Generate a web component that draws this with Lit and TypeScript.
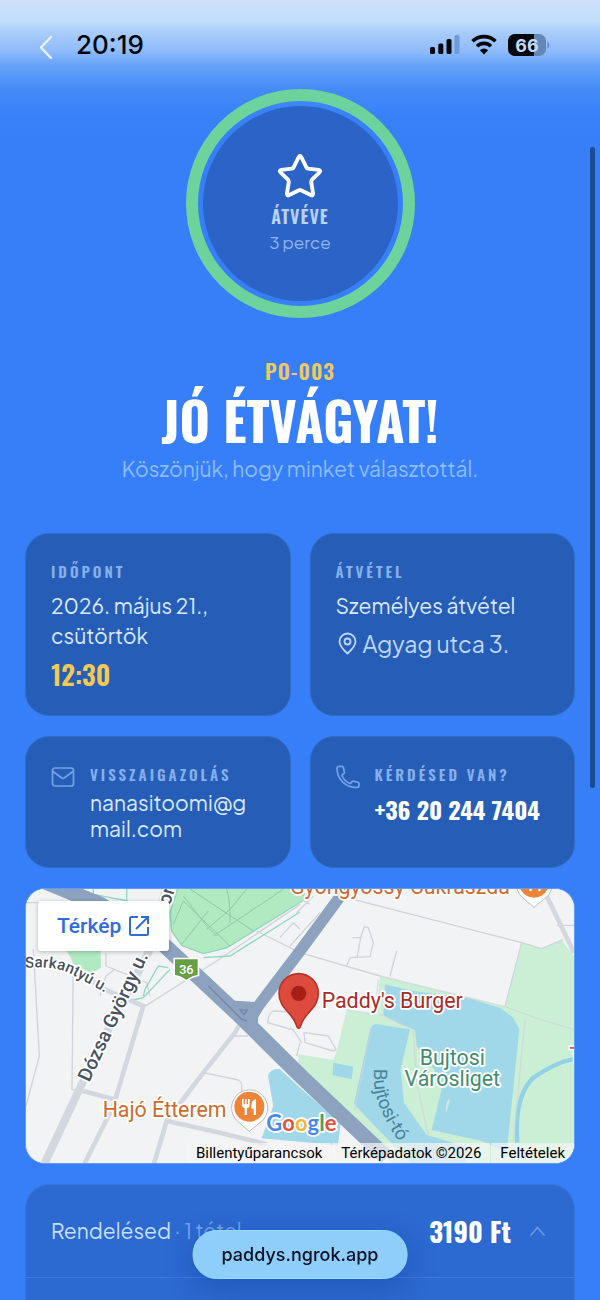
import { LitElement, html, css, svg } from "lit";
import { customElement, state } from "lit/decorators.js";

const tokens = css`
  :host {
    --display: "Oswald", "Roboto Condensed", "Liberation Sans Narrow", sans-serif;
    --body: "Plus Jakarta Sans", "Inter", sans-serif;
    --ui: "Inter", "Liberation Sans", sans-serif;
  }
  * {
    box-sizing: border-box;
  }
  p,
  h1,
  h2 {
    margin: 0;
  }
  a {
    color: inherit;
    text-decoration: none;
  }
  svg {
    display: block;
    flex: none;
  }
`;

@customElement("status-bar")
class StatusBar extends LitElement {
  static styles = [
    tokens,
    css`
      :host {
        display: block;
        color: #05070d;
        font-family: var(--ui);
      }
      .bar {
        display: flex;
        align-items: center;
        height: 89px;
        padding: 0 50px 0 38px;
      }
      .back {
        padding: 4px 0 0;
        border: 0;
        background: none;
        color: #eaf3ff;
      }
      .time {
        flex: 1;
        padding-left: 22px;
        font-size: 26px;
        font-weight: 500;
        line-height: 30px;
      }
      .signals {
        display: flex;
        align-items: center;
        gap: 11px;
      }
    `,
  ];

  render() {
    return html`
      <header class="bar">
        <button class="back" aria-label="Vissza">
          <svg width="16" height="26" viewBox="0 0 16 26" fill="none" stroke="currentColor" stroke-width="2.4" stroke-linecap="round" stroke-linejoin="round">
            <path d="M13 3 3 13.500l10 10.500" />
          </svg>
        </button>
        <time class="time">20:19</time>
        <div class="signals">
          <svg width="30" height="20" viewBox="0 0 30 20" fill="currentColor" role="img" aria-label="Térerő">
            <rect x="0" y="12" width="5" height="7" rx="1.5" />
            <rect x="8.300" y="8.500" width="5" height="10.500" rx="1.500" />
            <rect x="16.500" y="4" width="5" height="15" rx="1.500" />
            <rect x="24.500" y="0" width="5" height="19" rx="1.500" fill="#6f9bd6" />
          </svg>
          <svg width="26" height="21" viewBox="0 0 26 21" fill="none" stroke="currentColor" stroke-width="3.600" role="img" aria-label="Wi-Fi">
            <path d="M1.500 7.300a16.500 16.500 0 0 1 23 0" />
            <path d="M6 12.200a10 10 0 0 1 14 0" />
            <path d="M13 20.500 8.900 16.200a6 6 0 0 1 8.200 0Z" fill="currentColor" stroke="none" />
          </svg>
          <svg width="42" height="24" viewBox="0 0 42 24" role="img" aria-label="Akkumulátor 66%">
            <rect x="0" y="1" width="38" height="22" rx="7" fill="#6388b8" />
            <path d="M7 1h19v22H7a7 7 0 0 1-7-7V8a7 7 0 0 1 7-7Z" fill="#05070d" />
            <path d="M39.500 8.500c2.300 1 2.300 6 0 7Z" fill="#6388b8" />
            <text x="19" y="18.500" text-anchor="middle" fill="#c2dbf8" font-family="Inter, sans-serif" font-size="18" font-weight="700">66</text>
          </svg>
        </div>
      </header>
    `;
  }
}

@customElement("pickup-map")
class PickupMap extends LitElement {
  static styles = [
    tokens,
    css`
      :host {
        display: block;
      }
      .frame {
        display: grid;
        overflow: hidden;
        border: 1px solid #5f9bf5;
        border-radius: 20px;
        background: #f2f3f4;
        font-family: "Roboto", "Liberation Sans", sans-serif;
        font-weight: 400;
      }
      .canvas,
      .overlay {
        grid-area: 1 / 1;
        width: 100%;
      }
      .overlay {
        z-index: 1;
        display: flex;
        flex-direction: column;
        justify-content: space-between;
        align-items: flex-start;
      }
      .open {
        display: flex;
        align-items: center;
        gap: 8px;
        height: 50px;
        margin: 12px;
        padding: 0 20px 0 19px;
        border-radius: 3px;
        background: #fff;
        box-shadow: 0 1px 4px rgba(0, 0, 0, 0.25);
        color: #2f6cdb;
        font-size: 21px;
        font-weight: 500;
      }
      .legal {
        display: flex;
        align-self: flex-end;
        gap: 1px;
        color: #000;
        font-size: 15px;
        line-height: 20px;
      }
      .legal a {
        padding: 0 9px;
        background: rgba(245, 245, 245, 0.72);
      }
      .label {
        paint-order: stroke;
        stroke: #fff;
        stroke-width: 11px;
        stroke-linejoin: round;
      }
      .place {
        font-size: 64px;
      }
      .street {
        font-size: 58px;
        font-weight: 500;
        fill: #475160;
      }
      .minor {
        font-size: 46px;
      }
    `,
  ];

  private pin() {
    return svg`
      <path d="M897 457c-4 0-6-4-8-10-11-37-52-50-52-95a59 59 0 0 1 118 0c0 45-42 58-52 95-2 6-3 10-6 10Z" fill="#dd4b3e" stroke="#b5352a" stroke-width="5" />
      <circle cx="896" cy="352" r="23" fill="#a61f17" />`;
  }

  private food(x: number, y: number) {
    return svg`
      <g transform="translate(${x} ${y})">
        <path d="M0 74c-14-12-25-21-36-31A54 54 0 1 1 38 43C26 53 14 62 0 74Z" fill="#fff" stroke="#b9bdc2" stroke-width="3" />
        <circle r="45" fill="#ee8438" />
        <path d="M-22-23v17q0 9 8 10v21h7V4q8-1 8-10v-17h-5v16h-4v-16h-5v16h-4v-16ZM20-23q-14 4-14 20v9h7v19h7Z" fill="#fff" />
      </g>`;
  }

  render() {
    return html`
      <section class="frame" aria-label="Térkép">
        <svg class="canvas" viewBox="78 39 1644 822" role="img" aria-label="Paddy's Burger a térképen">
          <rect x="78" y="39" width="1644" height="822" fill="#f2f3f4" />
          <path d="M535 30H912V72L680 216 610 233 545 208 515 165 510 110Z" fill="#b1eac0" stroke="#8ed6bd" stroke-width="4" />
          <path d="M200 225H302L303 275 275 292 225 268Z" fill="#b1eac0" />
          <path d="M1010 525 1040 402 1130 415 1140 300 1515 392 1567 200 1625 218 1685 192 1730 250V870H1180L895 570V535L1000 552Z" fill="#caefd4" />
          <path d="M1155 325 1240 345 1400 365 1500 395 1540 425 1558 460 1520 830 1445 795 1295 762 1325 640 1302 580 1250 510 1245 462 1200 445 1150 418Z" fill="#a0d7e9" />
          <path d="M1130 445 1230 460 1202 580 1212 680 1280 777 1400 812V870H1240L1062 685 1110 460Q1115 445 1130 445Z" fill="#a0d7e9" />
          <path d="M1000 560 1060 572 1055 610 998 598Z" fill="#a0d7e9" />
          <path d="M804 600Q812 574 840 580L900 635 1022 742 1014 808 785 787 820 690Z" fill="#a0d7e9" />
          <path d="M1725 548Q1665 560 1600 605 1542 660 1552 800" fill="none" stroke="#92d2e8" stroke-width="13" />
          <path d="M1340 705l8-27v-12l-7 13-5 28Z" fill="#caefd4" />

          <g fill="none" stroke="#cfd4dc" stroke-width="4" stroke-linejoin="round">
            <path d="M78 80H120M100 220 118 540 78 690M220 230 216 640 345 675M345 280 318 300 300 360M318 230V270L440 320 450 360" />
            <path d="M428 395 650 255 900 85M610 590 715 612Q728 618 725 640L722 700M900 230 1140 300M740 420 700 480H745" />
            <path d="M1060 70 1565 200 1625 218 1690 190M1565 200 1515 392M1040 270 1050 245 1110 242 1120 200 1105 155 1093 152 1082 185 1072 242M1058 185H1080M1190 225 1170 300" />
            <path d="M1140 300 1515 392 1620 430 1722 460M1575 430 1537 830M1135 310 1125 415 1035 400M1140 415 1240 460 1250 620 1285 780M1115 450 1065 700" opacity=".7" />
            <path d="M870 408 820 405Q805 412 803 440L880 462 905 500M912 470 985 480 1008 520 1000 525 915 500ZM890 540 900 500M1722 148H1670M770 165 900 230M840 185 880 140 900 160M890 110 940 60" />
            <path d="M890 60 930 85M870 210 960 110" />
          </g>
          <g fill="none" stroke="#8fc9a2" stroke-width="3">
            <path d="M520 145 550 75 690 210M550 60 620 150 650 180M545 205 625 105M620 160 690 100 740 39M680 39Q692 80 690 140M640 180 850 40M570 39 760 165" />
          </g>
          <g fill="none" stroke="#8fd8bf" stroke-width="4">
            <path d="M400 372 430 365 510 280M430 360 435 340 475 270 505 275M280 39V55L380 74V39M610 245 690 240 900 108" />
          </g>
          <g fill="none" stroke="#d3d8e0" stroke-width="14" stroke-linejoin="round">
            <path d="M130 870 245 625 330 450 445 230 500 30" stroke-width="24" />
            <path d="M250 870 340 690 430 390 325 345 200 270 78 262" />
            <path d="M460 870 500 735 610 590 705 470 722 440M500 735 660 770 800 805M250 645 350 672" />
            <path d="M1630 39 1722 230" />
          </g>
          <g fill="none" stroke="#8ca2bf" stroke-linejoin="round">
            <path d="M130 15 300 85 490 205 720 420 900 598 1160 845" stroke-width="46" />
            <path d="M745 440 775 390 900 225 1040 35" stroke-width="34" />
            <path d="M680 380 770 385 765 470Z" fill="#8ca2bf" stroke-width="14" />
            <path d="M625 330 725 430 740 435M720 402H742L732 415Z" stroke="#7188ab" stroke-width="4" />
          </g>

          <g>
            <path d="M520 245h78v55q-20 3-39 17-19-14-39-17Z" fill="#fff" />
            <path d="M525 250h68v46q-18 3-34 15-16-12-34-15Z" fill="#669f45" />
            <text x="559" y="293" text-anchor="middle" fill="#fff" font-size="38" font-weight="500">36</text>
          </g>

          <text class="label street" transform="translate(268 620) rotate(-65)">Dózsa György u.</text>
          <text class="label street" transform="translate(510 90) rotate(-74)">or</text>
          <path id="sarkantyu" d="M76 276Q165 268 215 295T360 375" fill="none" />
          <text class="label street minor"><textPath href="#sarkantyu">Sarkantyú u.</textPath></text>
          <path id="bujtosi" d="M1122 578C1118 650 1130 710 1235 850" fill="none" />
          <text font-size="56" fill="#4b8397"><textPath href="#bujtosi">Bujtosi-tó</textPath></text>

          <text class="label place" x="308" y="723" fill="#cd6a2c">Hajó Étterem</text>
          <text class="label place" x="870" y="54" fill="#cd6a2c">Gyöngyössy Cukrászda</text>
          <text class="label place" x="965" y="395" fill="#ab2a26">Paddy's Burger</text>
          <g fill="#448b70" text-anchor="middle">
            <text class="label place" x="1357" y="566">Bujtosi</text>
            <text class="label place" x="1357" y="631">Városliget</text>
          </g>
          <text class="label place" x="1708" y="560" fill="#cd6a2c">T</text>
          ${this.food(748, 692)} ${this.food(1602, 20)} ${this.pin()}
          <text class="label" x="799" y="765" font-family="Lato, sans-serif" font-size="66" font-weight="700"><tspan fill="#4b86ee">G</tspan><tspan fill="#e2503f">o</tspan><tspan fill="#f2b82e">o</tspan><tspan fill="#4b86ee">g</tspan><tspan fill="#45a35c">l</tspan><tspan fill="#e2503f">e</tspan></text>
        </svg>
        <div class="overlay">
          <a class="open" href="#terkep">
            Térkép
            <svg width="20" height="20" viewBox="0 0 20 20" fill="none" stroke="currentColor" stroke-width="2">
              <path d="M9 1H2.500Q1 1 1 2.500v15Q1 19 2.500 19h15q1.500 0 1.500-1.500V11M12 1h7v7M19 1 7 13" />
            </svg>
          </a>
          <nav class="legal">
            <a href="#billentyuk">Billentyűparancsok</a>
            <a href="#adatok">Térképadatok ©2026</a>
            <a href="#feltetelek">Feltételek</a>
          </nav>
        </div>
      </section>
    `;
  }
}

@customElement("app-root")
class AppRoot extends LitElement {
  @state() private open = true;

  static styles = [
    tokens,
    css`
      :host {
        display: flex;
        flex-direction: column;
        min-height: 100vh;
        background: linear-gradient(#cfe2fb 0, #bfddfb 22px, #a9cdfa 32px, #91bcfb 50px, #67a4f9 65px, #468bf7 88px, #3881f8 115px, #377ff8 140px);
        color: #dbe9ff;
        font-family: var(--body);
        font-weight: 400;
      }
      .page {
        flex: 1;
        display: flex;
        flex-direction: column;
        gap: 20px;
        padding: 0 25px;
      }
      .hero {
        display: flex;
        flex-direction: column;
        align-items: center;
        padding-bottom: 29px;
        text-align: center;
      }
      .ring {
        width: 229px;
        height: 229px;
        margin-bottom: 38px;
        padding: 5px;
        border: 12px solid #6dd39d;
        border-radius: 50%;
      }
      .disc {
        display: flex;
        flex-direction: column;
        align-items: center;
        justify-content: center;
        height: 100%;
        padding-bottom: 4px;
        border-radius: 50%;
        background: #2b64c6;
      }
      .state {
        color: #b9d2f7;
        font-family: var(--display);
        font-size: 18px;
        font-weight: 600;
        line-height: 34px;
        letter-spacing: 1px;
      }
      .ago {
        color: #8fb6f0;
        font-size: 17px;
        line-height: 18px;
      }
      .code {
        color: #edc95f;
        font-family: var(--display);
        font-size: 21px;
        font-weight: 600;
        line-height: 30px;
        letter-spacing: 1px;
      }
      .title {
        color: #fff;
        font-family: var(--display);
        font-size: 52px;
        font-weight: 700;
        line-height: 68px;
      }
      .thanks {
        color: #8dbcfb;
        font-size: 21px;
        line-height: 30px;
      }
      .cards {
        display: grid;
        grid-template-columns: repeat(2, minmax(0, 1fr));
        gap: 20px 19px;
      }
      .card {
        display: flex;
        gap: 15px;
        min-height: 131px;
        padding: 25px;
        border: 1px solid #316bc5;
        border-radius: 24px;
        background: #265eb7;
      }
      .icon {
        color: #74a3e4;
      }
      .fill {
        min-width: 0;
      }
      .label {
        color: #86b0eb;
        font-family: var(--display);
        font-size: 15px;
        font-weight: 600;
        line-height: 24px;
        letter-spacing: 3px;
      }
      .text {
        padding-top: 8px;
        font-size: 21px;
        line-height: 30px;
      }
      .mail {
        padding-top: 4px;
        line-height: 26px;
        overflow-wrap: anywhere;
      }
      .hour {
        padding-top: 8px;
        color: #f3c954;
        font-family: var(--display);
        font-size: 27px;
        font-weight: 600;
        line-height: 31px;
      }
      .address {
        display: flex;
        align-items: center;
        gap: 4px;
        padding-top: 8px;
        color: #bfd7fb;
        font-size: 23px;
        line-height: 30px;
      }
      .phone {
        display: block;
        padding-top: 3px;
        color: #fff;
        font-family: var(--display);
        font-size: 24px;
        font-weight: 700;
        line-height: 40px;
        white-space: nowrap;
      }
      .order {
        flex: 1;
        min-height: 116px;
        border: 1px solid #3a78dc;
        border-bottom: 0;
        border-radius: 24px 24px 0 0;
        background: #2c69d0;
      }
      .summary {
        display: flex;
        align-items: center;
        width: 100%;
        height: 93px;
        padding: 0 28px 0 25px;
        border: 0;
        border-bottom: 1px solid #3a7ae2;
        background: none;
        color: #c9dffe;
        font: 400 21px/30px var(--body);
        text-align: left;
      }
      .items {
        flex: 1;
        color: #73a4ee;
      }
      .total {
        padding-right: 18px;
        color: #fff;
        font-family: var(--display);
        font-size: 27px;
        font-weight: 700;
      }
      .chevron {
        color: #6699e6;
      }
      .host {
        position: fixed;
        bottom: 21px;
        left: 50%;
        transform: translateX(-50%);
        padding: 9px 28px;
        border: 1px solid #93defd;
        border-radius: 24px;
        background: #8fcefb;
        box-shadow: 0 8px 28px rgba(20, 60, 150, 0.4);
        color: #06101f;
        font: 500 18px/29px var(--ui);
      }
      .scroll {
        position: fixed;
        top: 147px;
        right: 5px;
        width: 5px;
        height: 641px;
        border-radius: 3px;
        background: #1c4b92;
      }
    `,
  ];

  render() {
    return html`
      <status-bar></status-bar>
      <main class="page">
        <section class="hero">
          <div class="ring">
            <div class="disc">
              <svg width="46" height="46" viewBox="-1 -1 48 48" fill="none" stroke="#fff" stroke-width="4" stroke-linejoin="round">
                <path d="M21.600 3.400q1.400-2.600 2.800 0l5.400 10.800q.5 1 1.600 1.100l11 1.400q2.800.5.900 2.600l-8 7.800q-.8.900-.6 2l1.900 12q.3 2.900-2.300 1.700l-10.200-5q-1.100-.6-2.200 0l-10.200 5q-2.600 1.200-2.300-1.700l1.900-12q.2-1.100-.6-2l-8-7.800q-1.900-2.100.9-2.600l11-1.400q1.100-.1 1.600-1.100Z" />
              </svg>
              <p class="state">ÁTVÉVE</p>
              <p class="ago">3 perce</p>
            </div>
          </div>
          <p class="code">PO-003</p>
          <h1 class="title">JÓ ÉTVÁGYAT!</h1>
          <p class="thanks">Köszönjük, hogy minket választottál.</p>
        </section>

        <section class="cards">
          <article class="card">
            <div class="fill">
              <h2 class="label">IDŐPONT</h2>
              <p class="text">2026. május 21., csütörtök</p>
              <p class="hour">12:30</p>
            </div>
          </article>
          <article class="card">
            <div class="fill">
              <h2 class="label">ÁTVÉTEL</h2>
              <p class="text">Személyes átvétel</p>
              <p class="address">
                <svg width="23" height="24" viewBox="0 0 23 24" fill="none" stroke="currentColor" stroke-width="1.800" stroke-linejoin="round">
                  <path d="M11.500 21.500C7 17.500 3.500 13.700 3.500 9.500a8 8 0 0 1 16 0c0 4.200-3.500 8-8 12Z" />
                  <circle cx="11.500" cy="9.500" r="3" />
                </svg>
                Agyag utca 3.
              </p>
            </div>
          </article>
          <article class="card">
            <svg class="icon" width="24" height="27" viewBox="0 0 24 27" fill="none" stroke="currentColor" stroke-width="1.700" stroke-linejoin="round" stroke-linecap="round">
              <rect x="1.500" y="6" width="21" height="18" rx="2.500" />
              <path d="m2 9.500 8.500 6.300q1.500 1 3 0L22 9.500" />
            </svg>
            <div class="fill">
              <h2 class="label">VISSZAIGAZOLÁS</h2>
              <p class="text mail">nanasitoomi@gmail.com</p>
            </div>
          </article>
          <article class="card">
            <svg class="icon" width="24" height="27" viewBox="0 0 24 27" fill="none" stroke="currentColor" stroke-width="1.700" stroke-linejoin="round" stroke-linecap="round">
              <path d="M1 6.500C1 17 9.500 25.500 20 25.500h1A2.200 2.200 0 0 0 23 23.300v-1.900a1.200 1.200 0 0 0-.9-1.100l-4.800-1.200a1.200 1.200 0 0 0-1.200.4l-1.100 1.500a1.100 1.100 0 0 1-1.300.4 13 13 0 0 1-7.600-7.600 1.100 1.100 0 0 1 .4-1.300L8 11.400a1.200 1.200 0 0 0 .4-1.200L7.300 5.300a1.200 1.200 0 0 0-1.100-.9H3.200A2.200 2.200 0 0 0 1 6.500Z" />
            </svg>
            <div class="fill">
              <h2 class="label">KÉRDÉSED VAN?</h2>
              <a class="phone" href="tel:+36202447404">+36 20 244 7404</a>
            </div>
          </article>
        </section>

        <pickup-map></pickup-map>

        <section class="order">
          <button class="summary" aria-expanded=${this.open} @click=${() => (this.open = !this.open)}>
            <span>Rendelésed&nbsp;</span>
            <span class="items">· 1 tétel</span>
            <span class="total">3190 Ft</span>
            <svg class="chevron" width="17" height="12" viewBox="0 0 17 12" fill="none" stroke="currentColor" stroke-width="1.800" stroke-linecap="round" stroke-linejoin="round">
              <path d="m2 10 6.500-7.500L15 10" />
            </svg>
          </button>
        </section>
      </main>
      <div class="scroll"></div>
      <a class="host" href="#paddys">paddys.ngrok.app</a>
    `;
  }
}
